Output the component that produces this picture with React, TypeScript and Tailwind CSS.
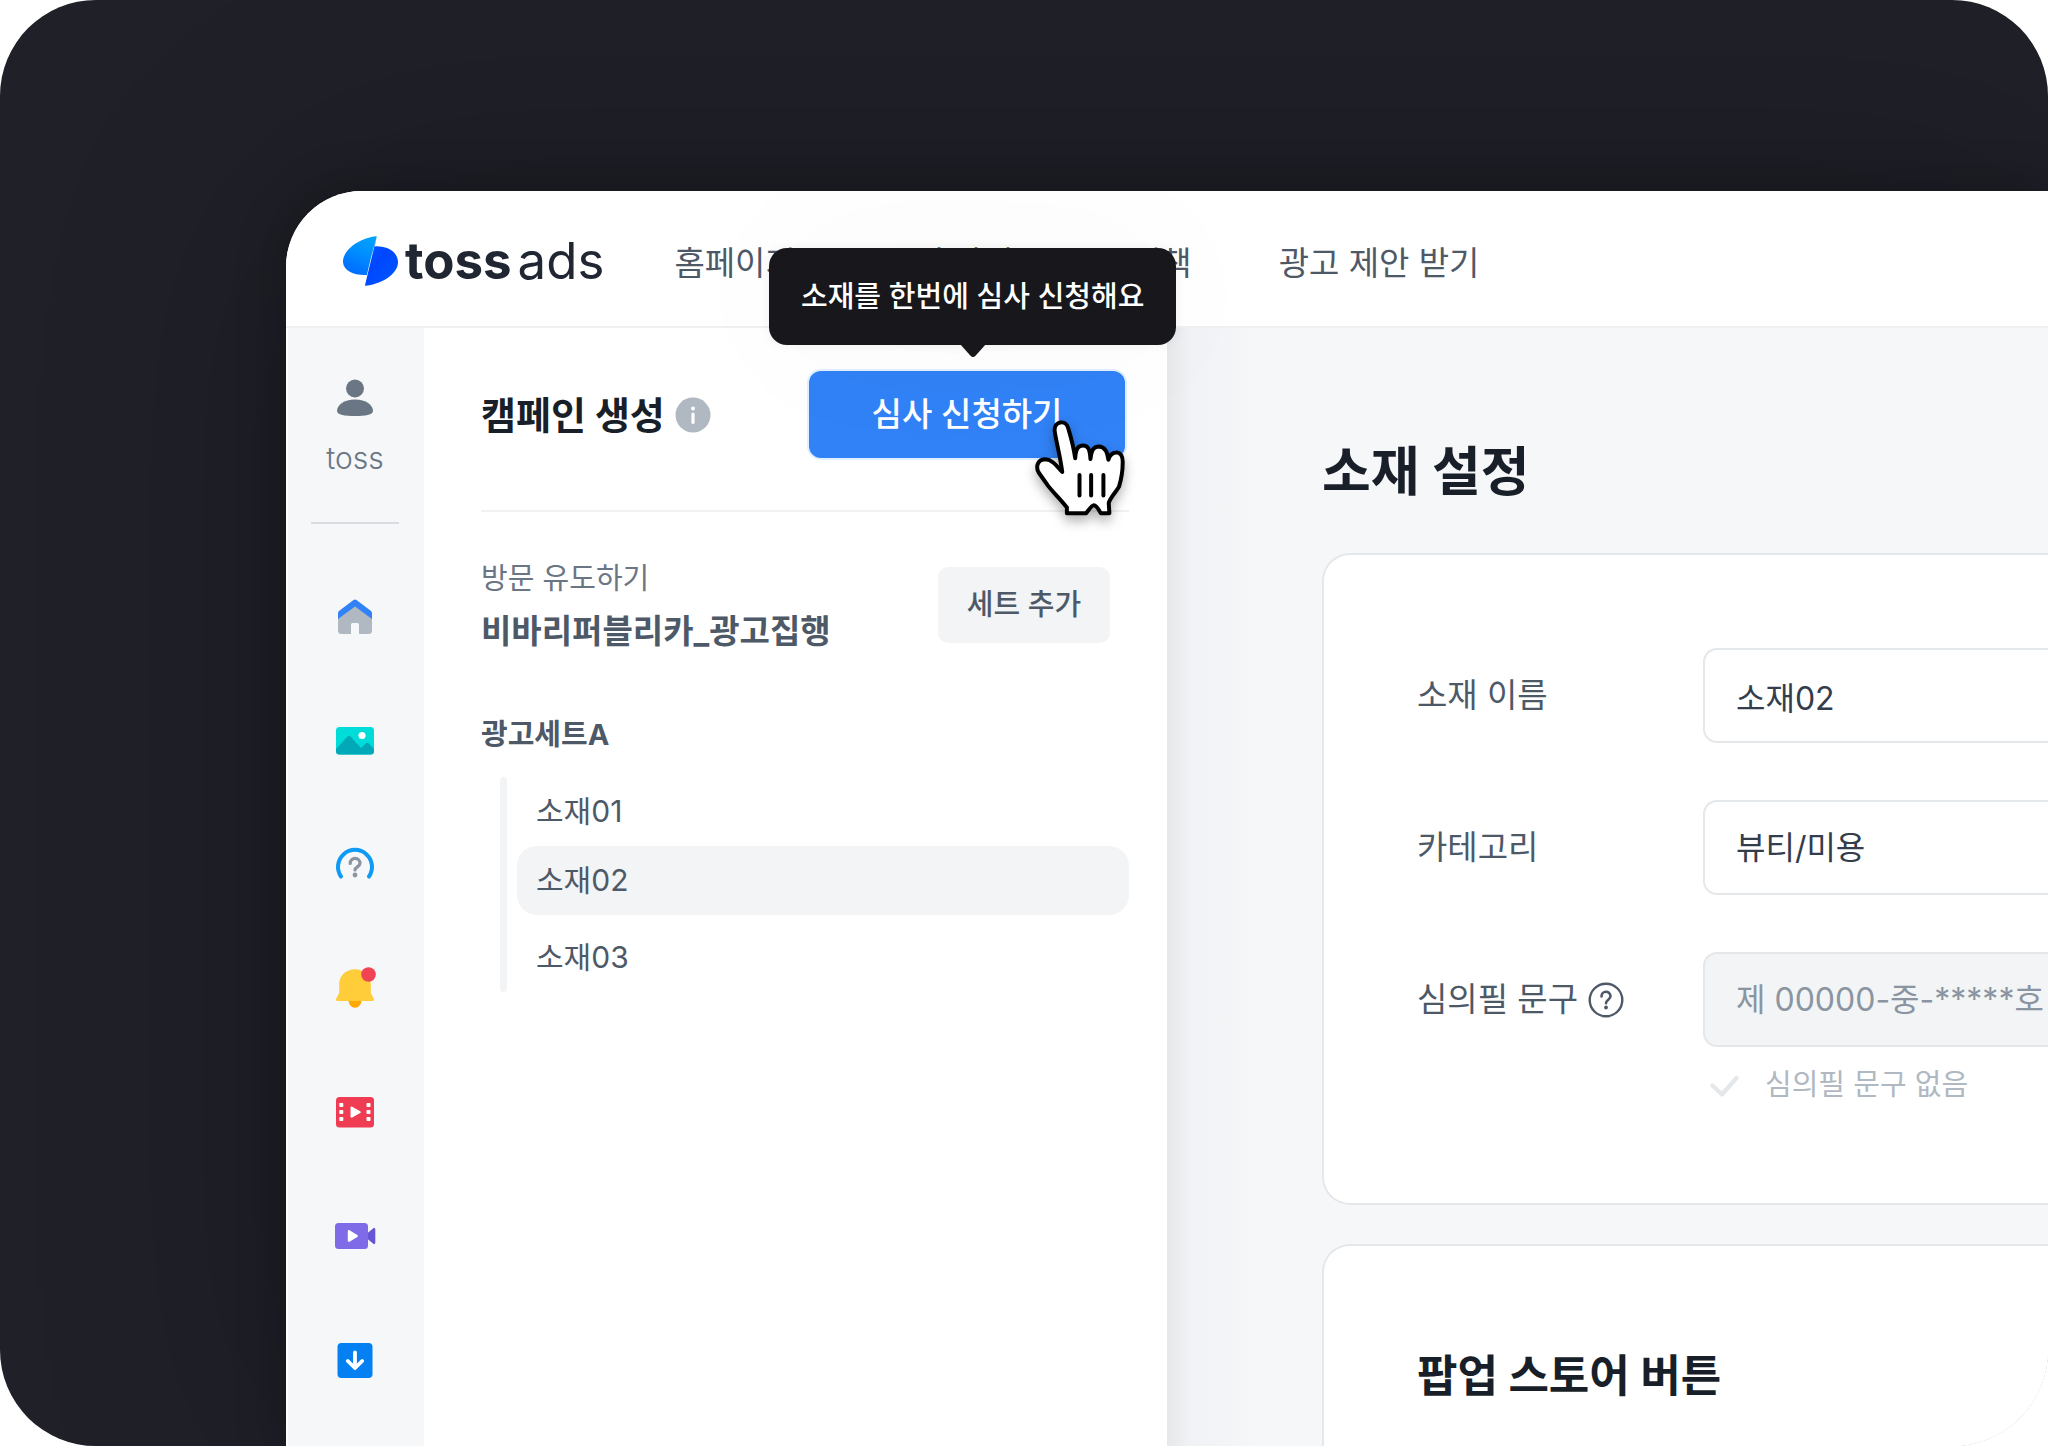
import { useState } from "react";
import type { ReactNode } from "react";

const NAV = ["홈페이지", "소재 가이드", "정책", "광고 제안 받기"];
const CREATIVES = ["소재01", "소재02", "소재03"];

function Icon({ children }: { children: ReactNode }) {
  return (
    <svg
      viewBox="0 0 40 40"
      className="size-10 overflow-visible"
      fill="none"
      aria-hidden="true"
    >
      {children}
    </svg>
  );
}

const MENU: { label: string; icon: ReactNode }[] = [
  {
    label: "홈",
    icon: (
      <>
        <path
          d="M3 18 20 6l17 12v15.5a3.5 3.5 0 0 1-3.5 3.5H24V27.5a1.5 1.5 0 0 0-1.5-1.5h-5a1.5 1.5 0 0 0-1.5 1.5V37H6.5A3.5 3.5 0 0 1 3 33.5Z"
          fill="#b0b8c1"
        />
        <path
          d="M3 22v-5.5c0-1 .5-2 1.3-2.7L18.5 3.1a2.4 2.4 0 0 1 3 0l14.2 10.7c.8.7 1.3 1.7 1.3 2.7V22L20 9.500Z"
          fill="#3182f6"
        />
      </>
    ),
  },
  {
    label: "소재",
    icon: (
      <>
        <rect x="1" y="6" width="38" height="27.5" rx="3.5" fill="#00dcd8" />
        <path
          d="M1 28 12.3 15.8a2.4 2.4 0 0 1 3.5 0L26 27l4.3-4.2a2.6 2.6 0 0 1 3.7 0l5 5.2v2a3.5 3.5 0 0 1-3.5 3.5h-31A3.5 3.5 0 0 1 1 30Z"
          fill="#00a8b8"
        />
        <circle cx="27" cy="14.5" r="3.6" fill="#fff" />
      </>
    ),
  },
  {
    label: "도움말",
    icon: (
      <>
        <path
          d="M6 31.5A17 17 0 1 1 34 31.5"
          stroke="#0f9af5"
          strokeWidth="4"
          strokeLinecap="round"
        />
        <path
          d="M15.2 18.5C15.2 11.8 25 11.8 25 18.3 25 21.8 20 21.8 20 25"
          stroke="#8b95a1"
          strokeWidth="3.2"
          strokeLinecap="round"
        />
        <circle cx="20" cy="30" r="2.4" fill="#8b95a1" />
      </>
    ),
  },
  {
    label: "알림",
    icon: (
      <>
        <path
          d="M13.5 31h13c0 4.5-3 7.7-6.5 7.7S13.5 35.5 13.5 31Z"
          fill="#ffa805"
        />
        <path
          d="M20 .3C11 .3 4.2 7 4.2 15v9L1.1 30c-.5 1 .1 2 1.2 2h35.4c1.1 0 1.7-1 1.2-2l-3.1-6v-9C35.8 7 29 .3 20 .3Z"
          fill="#ffcd3a"
        />
        <circle cx="33.5" cy="5.5" r="7.3" fill="#f04452" />
      </>
    ),
  },
  {
    label: "영상",
    icon: (
      <>
        <rect x="1" y="4" width="38" height="30.6" rx="3.5" fill="#f03c53" />
        <g fill="#fff">
          {[10, 17, 24].map((y) => (
            <g key={y}>
              <rect x="4.3" y={y} width="4" height="4" rx=".8" />
              <rect x="31.5" y={y} width="4" height="4" rx=".8" />
            </g>
          ))}
          <path d="M15.5 14.800c0-1 .9-1.500 1.700-1l8 4.500c.8.5.8 1.300 0 1.800l-8 4.500c-.8.5-1.700 0-1.700-1Z" />
        </g>
      </>
    ),
  },
  {
    label: "촬영",
    icon: (
      <>
        <path
          d="m32 16.5 6.3-5.2c.8-.7 2-.1 2 1v13.4c0 1.1-1.2 1.7-2 1L32 21.5Z"
          fill="#6656d6"
        />
        <rect x="0" y="6" width="33" height="26" rx="3.5" fill="#7f6be8" />
        <path
          d="M12.8 14.2c0-1 .9-1.5 1.7-1l7.8 4.9c.8.5.8 1.3 0 1.8l-7.8 4.9c-.8.5-1.7 0-1.7-1Z"
          fill="#fff"
        />
      </>
    ),
  },
  {
    label: "다운로드",
    icon: (
      <>
        <rect x="2.5" y="2" width="35" height="35" rx="4" fill="#0580f2" />
        <path
          d="M20 11.5V27M12.8 20l7.2 7 7.2-7"
          stroke="#fff"
          strokeWidth="3.8"
          strokeLinecap="round"
          strokeLinejoin="round"
        />
      </>
    ),
  },
];

function Logo() {
  return (
    <a
      href="#"
      className="flex items-center gap-1.5 text-[51px] leading-none text-[#202632]"
    >
      <svg viewBox="185 165 172 156" className="h-[52px] w-[57px]" aria-hidden="true">
        <defs>
          <linearGradient id="wingLeft" x1="1" y1="0" x2="0.6" y2="1">
            <stop offset="0" stopColor="#00a5ff" />
            <stop offset="0.5" stopColor="#0090ff" />
            <stop offset="1" stopColor="#0070ff" />
          </linearGradient>
          <linearGradient id="wingRight" x1="0" y1="0" x2="0.7" y2="1">
            <stop offset="0" stopColor="#0068ff" />
            <stop offset="0.5" stopColor="#0046ff" />
            <stop offset="1" stopColor="#0055ff" />
          </linearGradient>
        </defs>
        <path
          d="M290 168C236 172 186 212 188 247c2 28 36 40 72 38l12-50Z"
          fill="url(#wingLeft)"
        />
        <path
          d="M290 168 284 199c38-2 68 16 70 46 2 37-52 70-100 73Z"
          fill="url(#wingRight)"
        />
      </svg>
      <span>
        <b className="font-bold">toss</b>
        <span className="ml-1.5">ads</span>
      </span>
    </a>
  );
}

function PointerHand() {
  return (
    <svg
      viewBox="40 80 280 300"
      className="pointer-events-none absolute top-[47px] left-[225px] h-[100px] w-[93px] overflow-visible drop-shadow-[0_6px_6px_rgba(0,0,0,0.3)]"
      stroke="#000"
      strokeWidth="12"
      strokeLinecap="round"
      strokeLinejoin="round"
      aria-hidden="true"
    >
      <path
        d="M139 366v-17c-18-24-42-46-57-66L55 245c-12-20-3-41 20-41 20 1 32 18 50 38-5-42-20-100-23-125-1-29 34-33 41-7 9 30 17 60 21 91 2-30 9-39 24-39 14 0 20 10 22 41 3-30 11-38 26-38 18 1 25 15 28 40 4-16 13-22 26-22 15 3 18 15 17 33 0 26-7 57-11 70-8 15-28 34-31 50l2 30h-26c-9-17-15-24-21-24s-12 10-23 24Z"
        fill="#fff"
      />
      <path d="M177 251v62M212 251v62M249 251v62" />
    </svg>
  );
}

function TopBar() {
  return (
    <header className="flex h-[137px] items-center border-b-2 border-[#eff0f2] bg-white pt-1 pl-14">
      <Logo />
      <nav className="ml-[70px] flex gap-[87px] pt-1 text-[33px] leading-12 whitespace-nowrap text-[#4e5968]">
        {NAV.map((item) => (
          <a key={item} href="#">
            {item}
          </a>
        ))}
      </nav>
    </header>
  );
}

function SideMenu() {
  return (
    <aside className="ml-0.5 flex w-[136px] shrink-0 flex-col items-center bg-[#f5f7f9] pt-[50px] pr-0.5">
      <a
        href="#"
        className="flex flex-col items-center gap-5 text-[30px] leading-10 font-light text-[#6b7684]"
      >
        <Icon>
          <circle cx="20" cy="10.5" r="9" fill="#6b7684" />
          <path
            d="M2 33c0-6 7-11.5 18-11.5S38 27 38 33c0 4-8 5-18 5S2 37 2 33Z"
            fill="#6b7684"
          />
        </Icon>
        toss
      </a>
      <div className="mt-11 h-0.5 w-[88px] bg-[#d9dde1]" />
      <nav className="mt-[73px] flex flex-col gap-[84px]">
        {MENU.map((item) => (
          <a key={item.label} href="#" aria-label={item.label}>
            <Icon>{item.icon}</Icon>
          </a>
        ))}
      </nav>
    </aside>
  );
}

function CampaignPanel() {
  const [selected, setSelected] = useState("소재02");

  return (
    <section className="relative z-10 flex w-[743px] shrink-0 flex-col bg-white pt-[43px] pr-[38px] pl-[57px]">
      <div className="flex items-center border-b-2 border-[#f0f1f3] pb-[52px]">
        <h2 className="text-[38px] leading-12 font-bold text-[#191f28]">
          캠페인 생성
        </h2>
        <button type="button" aria-label="캠페인 안내" className="ml-2.5">
          <svg viewBox="0 0 36 36" className="size-9" aria-hidden="true">
            <circle cx="18" cy="18" r="17.5" fill="#b0b8c1" />
            <circle cx="18" cy="11.5" r="2" fill="#fff" />
            <path
              d="M18 17v8.500"
              stroke="#fff"
              strokeWidth="3.2"
              strokeLinecap="round"
            />
          </svg>
        </button>

        <div className="relative mr-1 ml-auto">
          <button
            type="button"
            className="h-[87px] w-[316px] rounded-xl bg-[#3182f6] text-[33px] font-medium text-white shadow-[0_0_0_2px_#e1efff]"
          >
            심사 신청하기
          </button>
          {/* Tooltip */}
          <div
            role="tooltip"
            className="absolute bottom-[113px] -left-10 flex h-[97px] items-center rounded-[18px] bg-[#17171c] px-8 text-[29px] font-medium whitespace-nowrap text-white shadow-[0_0_12px_rgba(0,0,0,0.06),0_0_160px_rgba(0,0,0,0.03)]"
          >
            소재를 한번에 심사 신청해요
            <svg
              viewBox="0 0 26 14"
              className="absolute top-full left-1/2 -mt-px h-3.5 w-[26px] -translate-x-1/2"
              aria-hidden="true"
            >
              <path d="M0 0h26L15.5 11.8a3.5 3.5 0 0 1-5 0Z" fill="#17171c" />
            </svg>
          </div>
          <PointerHand />
        </div>
      </div>

      <div className="flex items-center pt-10 pr-[19px] text-[#4e5968]">
        <div className="leading-[53px]">
          <p className="text-[29px] text-[#6b7684]">방문 유도하기</p>
          <p className="text-[33px] font-bold">비바리퍼블리카_광고집행</p>
        </div>
        <button
          type="button"
          className="ml-auto h-[76px] w-[172px] rounded-[10px] bg-[#f2f4f6] text-[29px] font-medium"
        >
          세트 추가
        </button>
      </div>

      <h3 className="mt-[55px] text-[29px] leading-11 font-bold text-[#4e5968]">
        광고세트A
      </h3>
      <div className="mt-5 ml-[19px] flex gap-[10px]">
        <div className="w-[7px] rounded-full bg-[#f2f4f6]" />
        <ul className="flex-1 text-[30px] text-[#4e5968]">
          {CREATIVES.map((name) => (
            <li key={name} className="last:mt-2">
              <button
                type="button"
                onClick={() => setSelected(name)}
                className={`flex h-[69px] w-full items-center rounded-[20px] px-[19px] ${
                  selected === name ? "bg-[#f2f4f6]" : ""
                }`}
              >
                {name}
              </button>
            </li>
          ))}
        </ul>
      </div>
    </section>
  );
}

const FIELD =
  "h-[95px] min-w-0 flex-1 appearance-none rounded-l-[14px] border-2 border-r-0 border-[#e5e8eb] pl-[31px] text-[32px] outline-none";

function CreativeSettings() {
  const [name, setName] = useState("소재02");
  const [noReview, setNoReview] = useState(false);

  return (
    <main className="flex min-w-0 flex-1 flex-col bg-[#f5f7f9] bg-[linear-gradient(to_right,#e6e8ea,#f1f2f5_24px,#f5f7f9_90px)] pt-28 pl-[155px]">
      <h1 className="text-[53px] leading-16 font-bold text-[#191f28]">
        소재 설정
      </h1>

      <form className="mt-[49px] rounded-l-[28px] border-2 border-r-0 border-[#e5e8eb] bg-white pt-[93px] pb-24 pl-[93px] text-[#4e5968]">
        <div className="flex flex-col gap-[57px] text-[33px]">
          <div className="flex items-center">
            <label htmlFor="name" className="w-[286px] shrink-0">
              소재 이름
            </label>
            <input
              id="name"
              value={name}
              onChange={(e) => setName(e.target.value)}
              className={`${FIELD} bg-white text-[#333d4b]`}
            />
          </div>
          <div className="flex items-center">
            <label htmlFor="category" className="w-[286px] shrink-0">
              카테고리
            </label>
            <select id="category" className={`${FIELD} bg-white text-[#333d4b]`}>
              <option>뷰티/미용</option>
            </select>
          </div>
          <div className="flex items-center">
            <div className="flex w-[286px] shrink-0 items-center gap-2.5">
              <label htmlFor="review">심의필 문구</label>
              <button type="button" aria-label="심의필 문구 도움말">
                <svg
                  viewBox="0 0 36 36"
                  className="size-9"
                  fill="none"
                  stroke="#4e5968"
                  strokeLinecap="round"
                  aria-hidden="true"
                >
                  <circle cx="18" cy="18" r="16.3" strokeWidth="2.4" />
                  <path
                    d="M13.5 14.5c0-6.2 9-6.2 9-.2 0 3.2-4.5 3.6-4.5 6.9"
                    strokeWidth="2.6"
                  />
                  <circle cx="18" cy="25.5" r="1.9" fill="#4e5968" stroke="none" />
                </svg>
              </button>
            </div>
            <input
              id="review"
              disabled
              placeholder="제 00000-중-*****호"
              className={`${FIELD} bg-[#f2f4f6] placeholder:text-[#8b95a1]`}
            />
          </div>
        </div>
        <label className="mt-4 ml-[293px] flex items-center gap-[26px] text-[29px] leading-11 text-[#b0b8c1]">
          <input
            type="checkbox"
            checked={noReview}
            onChange={(e) => setNoReview(e.target.checked)}
            className="peer sr-only"
          />
          <svg
            viewBox="0 0 29 24"
            className="h-6 w-[29px] text-[#e5e8eb] peer-checked:text-[#3182f6]"
            fill="none"
            aria-hidden="true"
          >
            <path
              d="M2.5 12.5 12 21.5 26.5 5"
              stroke="currentColor"
              strokeWidth="4.4"
              strokeLinecap="round"
              strokeLinejoin="round"
            />
          </svg>
          심의필 문구 없음
        </label>
      </form>

      <section className="mt-[39px] flex-1 rounded-tl-[28px] border-2 border-r-0 border-b-0 border-[#e5e8eb] bg-white pt-[102px] pl-[93px]">
        <h2 className="text-[44px] leading-14 font-bold text-[#191f28]">
          팝업 스토어 버튼
        </h2>
      </section>
    </main>
  );
}

export default function App() {
  return (
    <div className="bg-white font-['Inter','Noto_Sans_CJK_KR',sans-serif]">
      <div className="flex min-h-screen flex-col overflow-hidden rounded-[96px] bg-[#1f2028] pt-[191px] pl-[286px]">
        <div className="flex flex-1 flex-col rounded-tl-[76px] bg-white shadow-[0_0_300px_rgba(0,0,0,0.2),0_0_50px_rgba(0,0,0,0.25)]">
          <div className="flex flex-1 flex-col overflow-hidden rounded-tl-[76px]">
            <TopBar />
            <div className="flex flex-1">
              <SideMenu />
              <CampaignPanel />
              <CreativeSettings />
            </div>
          </div>
        </div>
      </div>
    </div>
  );
}
